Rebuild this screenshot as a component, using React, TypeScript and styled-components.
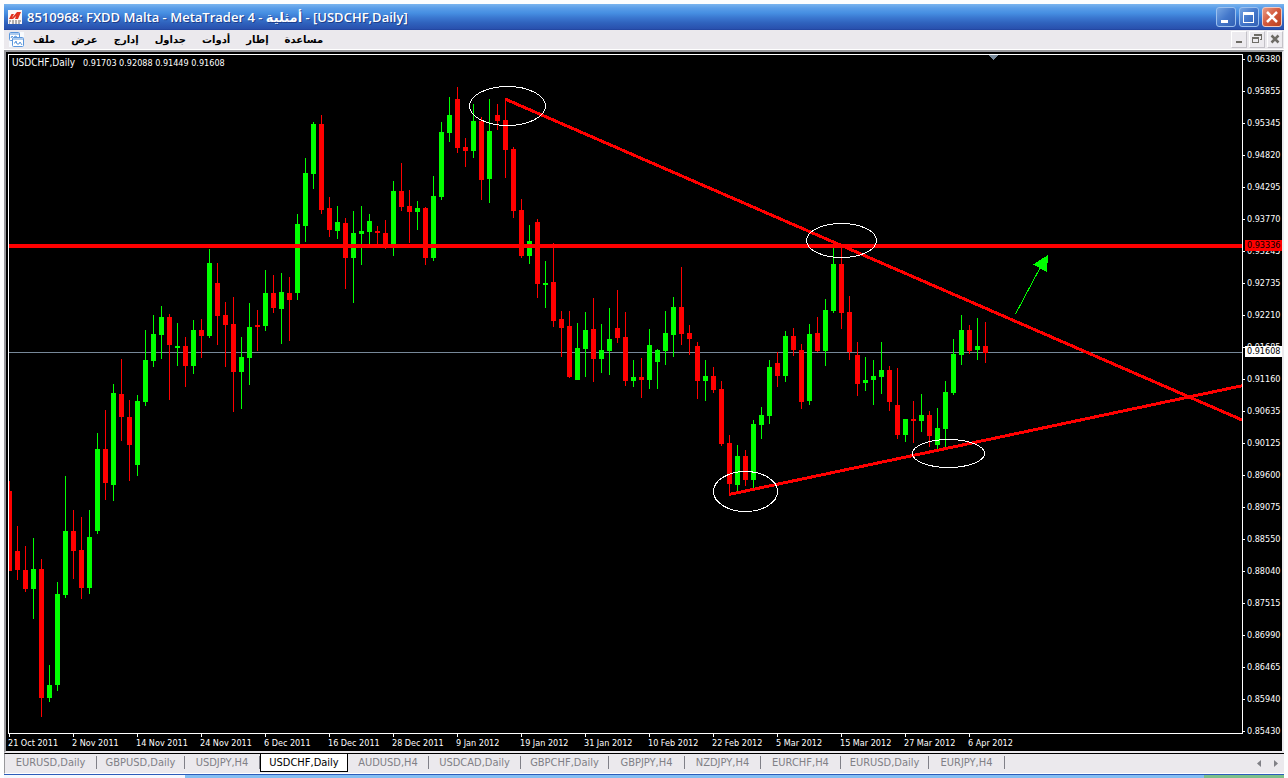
import React from "react";
import styled, { createGlobalStyle } from "styled-components";

const UP = "#00ff00";
const DOWN = "#ff0000";
const FACE = "#ebe9ed";
const AXIS_FONT = '"DejaVu Sans Condensed", "DejaVu Sans", sans-serif';

const GlobalStyle = createGlobalStyle`
  *, *::before, *::after { box-sizing: border-box; }
  body { margin: 0; background: #fdfdfe; font-family: ${AXIS_FONT}; }
  button { font-family: inherit; }
`;

const Page = styled.div`
  display: flex;
  flex-direction: column;
  min-height: 100vh;
  padding: 4px 4px 0;
`;

const TitleBar = styled.header`
  display: flex;
  align-items: center;
  height: 26px;
  padding: 0 2px 0 4px;
  background: linear-gradient(#79b4ee 0, #5b9de8 4px, #468fe2 9px, #3a76cf 14px, #2f62bd 19px, #2950ad 25px, #1e3f98 26px);
`;

const Title = styled.h1`
  flex: 1;
  margin: 0 0 0 5px;
  color: #fff;
  font: 600 13px/20px "Open Sans", "DejaVu Sans", sans-serif;
  text-shadow: 1px 1px 0 #1d3f8c;
  white-space: nowrap;
`;

const WindowButtons = styled.div`
  display: flex;
  gap: 3px;
`;

const WindowButton = styled.button<{ $danger?: boolean }>`
  width: 20px;
  height: 20px;
  padding: 0;
  border: 1px solid ${(p) => (p.$danger ? "#f3c9bf" : "#9cc0ee")};
  border-radius: 3px;
  background: ${(p) =>
    p.$danger
      ? "linear-gradient(135deg, #e89a86, #d2573a 50%, #b8401f)"
      : "linear-gradient(135deg, #76a5e2, #4478cb 50%, #3260b4)"};
  svg { display: block; }
`;

const MenuBar = styled.nav`
  display: flex;
  align-items: center;
  height: 20px;
  padding: 0 1px 0 5px;
  background: ${FACE};
  border-bottom: 1px solid #fff;
`;

const MenuList = styled.div`
  display: flex;
  flex: 1;
  gap: 16px;
  padding-left: 9px;
`;

const MenuItem = styled.button`
  padding: 0;
  border: 0;
  background: none;
  color: #000;
  font: bold 10px/16px "DejaVu Sans", sans-serif;
`;

const ChildButtons = styled.div`
  display: flex;
  gap: 2px;
`;

const ChildButton = styled.button`
  width: 16px;
  height: 17px;
  padding: 0;
  border: 1px solid;
  border-color: #fff #c4c2c8 #c4c2c8 #fff;
  background: #edebef;
  svg { display: block; }
`;

const ChartWindow = styled.main`
  display: grid;
  grid-template-columns: minmax(0, 1fr) 39px;
  grid-template-rows: 1fr 17px;
  flex: 1;
  padding: 2px 0 0 2px;
  border: 2px solid;
  border-color: #98989c ${FACE} ${FACE} #98989c;
  background: #000;
  color: #fff;
  font: 9px/12px ${AXIS_FONT};
`;

const Plot = styled.section`
  position: relative;
  overflow: hidden;
  border: 1px solid #fff;
`;

const PlotSvg = styled.svg`
  display: block;
  width: 100%;
  height: 100%;
`;

const Quote = styled.p`
  position: absolute;
  top: 2px;
  left: 3px;
  display: flex;
  align-items: baseline;
  gap: 8px;
  margin: 0;
`;

const QuoteSymbol = styled.span`
  font-size: 10px;
`;

const PriceScale = styled.ol`
  position: relative;
  margin: 0;
  padding: 0;
  list-style: none;
`;

/* The lowest label hangs past the plot's edge, beside the date scale. */
const PriceRow = styled.li`
  display: flex;
  align-items: center;
  height: 12px;
  margin-bottom: 20px;
  gap: 2px;
  &:first-child { margin-top: -1px; }
  &:last-of-type { margin-bottom: -8px; }
  &::before { content: ""; width: 2px; height: 1px; background: #fff; }
`;

const PriceTag = styled.output<{ $y: number; $bg: string }>`
  position: absolute;
  top: ${(p) => p.$y}px;
  left: 2px;
  right: 0;
  height: 11px;
  padding-left: 2px;
  background: ${(p) => p.$bg};
  color: #000;
  line-height: 11px;
`;

const DateScale = styled.ol`
  display: flex;
  grid-column: 1 / -1;
  margin: 0;
  padding: 0;
  list-style: none;
`;

const DateMark = styled.li`
  flex: 0 0 64px;
  white-space: nowrap;
  &::before { content: ""; display: block; width: 1px; height: 3px; margin-left: 1px; background: #fff; }
`;

const TabStrip = styled.div`
  display: flex;
  height: 21px;
  border-top: 1px solid #000;
  border-bottom: 1px solid #fff;
  border-left: 1px solid #98989c;
  background: ${FACE};
`;

const Tabs = styled.div`
  display: flex;
  flex: 1;
`;

const Tab = styled.button<{ $w: number; $active?: boolean }>`
  width: ${(p) => p.$w}px;
  height: ${(p) => (p.$active ? 18 : 13)}px;
  margin-top: ${(p) => (p.$active ? 0 : 2)}px;
  padding: 0;
  border: 0 solid ${(p) => (p.$active ? "#000" : "#808088")};
  border-width: ${(p) => (p.$active ? "0 1px 1px" : "0 1px 0 0")};
  background: ${(p) => (p.$active ? "#fff" : "none")};
  color: ${(p) => (p.$active ? "#000" : "#808086")};
  font: 11px/13px ${AXIS_FONT};
  white-space: nowrap;
`;

const ScrollButton = styled.button`
  width: 17px;
  padding: 0;
  border: 0;
  background: none;
  svg { display: block; margin: auto; }
`;

const Taskbar = styled.footer`
  height: 4px;
  border-top: 1px solid #2c5cba;
  background: linear-gradient(90deg, #f4f8fe 181px, #84bef2 181px, #84bef2 calc(100% - 80px), #7cc08a calc(100% - 80px));
`;

type Candle = [dir: 0 | 1, high: number, top: number, bottom: number, low: number];

// 1 is a rising day, 0 a falling one; levels are window rows.
const candles: Candle[] = [
  [0, 481, 491, 571, 571], [0, 526, 551, 570, 580], [0, 546, 570, 589, 592], [1, 538, 569, 589, 619],
  [0, 559, 569, 698, 717], [1, 665, 685, 698, 702], [1, 582, 594, 685, 691], [1, 476, 531, 595, 598],
  [0, 510, 531, 551, 579], [0, 517, 550, 588, 599], [1, 510, 537, 588, 594], [1, 433, 449, 531, 534],
  [0, 410, 449, 483, 500], [1, 384, 393, 485, 501], [0, 359, 394, 417, 441], [0, 400, 417, 445, 481],
  [1, 395, 401, 465, 476], [1, 330, 360, 402, 406], [1, 315, 334, 361, 367], [1, 306, 317, 335, 359],
  [0, 314, 317, 345, 400], [1, 323, 346, 348, 366], [0, 337, 346, 366, 387], [1, 320, 330, 366, 374],
  [0, 319, 330, 336, 358], [1, 249, 263, 336, 338], [0, 263, 283, 316, 345], [0, 302, 315, 325, 367],
  [0, 297, 324, 372, 412], [1, 337, 357, 372, 409], [1, 303, 327, 358, 385], [0, 310, 325, 327, 351],
  [1, 270, 293, 326, 331], [0, 275, 293, 308, 313], [1, 273, 292, 309, 344], [0, 277, 293, 300, 341],
  [1, 214, 224, 293, 300], [1, 158, 173, 226, 242], [1, 122, 124, 174, 189], [0, 115, 124, 210, 214],
  [0, 197, 208, 230, 237], [1, 206, 222, 231, 239], [0, 218, 223, 258, 289], [1, 211, 233, 258, 303],
  [1, 206, 231, 234, 265], [1, 214, 221, 232, 245], [0, 226, 231, 233, 245], [0, 220, 233, 246, 249],
  [1, 181, 191, 246, 256], [0, 163, 191, 207, 211], [0, 190, 206, 212, 243], [1, 201, 208, 212, 230],
  [0, 207, 208, 258, 265], [1, 176, 196, 258, 261], [1, 122, 132, 197, 200], [1, 97, 115, 133, 142],
  [0, 87, 99, 148, 153], [0, 138, 147, 151, 167], [1, 104, 121, 151, 158], [0, 117, 121, 180, 200],
  [1, 99, 131, 179, 203], [0, 104, 115, 121, 130], [0, 98, 120, 150, 178], [0, 147, 149, 211, 218],
  [0, 199, 210, 256, 258], [1, 225, 241, 256, 264], [0, 219, 222, 284, 298], [1, 261, 283, 285, 308],
  [0, 243, 282, 321, 327], [0, 311, 319, 328, 357], [0, 311, 326, 377, 378], [1, 323, 348, 380, 380],
  [1, 312, 330, 349, 377], [0, 298, 329, 359, 382], [1, 324, 350, 359, 373], [1, 308, 339, 351, 375],
  [0, 290, 328, 338, 343], [0, 312, 337, 381, 386], [1, 360, 377, 381, 387], [0, 358, 377, 380, 398],
  [1, 329, 345, 380, 389], [1, 349, 350, 362, 389], [1, 311, 333, 351, 365], [1, 297, 307, 335, 357],
  [0, 267, 307, 334, 345], [0, 325, 333, 339, 355], [0, 342, 346, 381, 399], [1, 360, 376, 381, 401],
  [0, 367, 376, 390, 393], [0, 381, 389, 444, 446], [0, 435, 443, 484, 494], [1, 445, 456, 485, 491],
  [0, 450, 456, 480, 486], [1, 420, 424, 480, 488], [1, 407, 415, 425, 439], [1, 360, 367, 416, 424],
  [0, 352, 363, 376, 387], [1, 331, 336, 376, 382], [0, 328, 336, 350, 356], [0, 344, 350, 402, 409],
  [1, 324, 334, 401, 405], [0, 317, 333, 351, 352], [1, 299, 310, 351, 366], [1, 246, 264, 311, 313],
  [0, 246, 264, 313, 329], [0, 296, 312, 352, 360], [0, 342, 355, 384, 396], [1, 357, 380, 383, 391],
  [1, 360, 376, 380, 405], [1, 342, 370, 377, 394], [0, 366, 370, 402, 411], [0, 368, 405, 435, 439],
  [1, 419, 419, 435, 442], [0, 401, 419, 421, 443], [1, 394, 415, 421, 432], [0, 411, 415, 436, 447],
  [1, 408, 428, 445, 449], [1, 381, 392, 429, 447], [1, 339, 354, 393, 395], [1, 315, 330, 355, 365],
  [0, 325, 330, 351, 354], [1, 318, 346, 350, 360], [0, 322, 346, 353, 363],
];

const prices = [
  "0.96380", "0.95855", "0.95345", "0.94820", "0.94295", "0.93770", "0.93245", "0.92735",
  "0.92210", "0.91685", "0.91160", "0.90635", "0.90125", "0.89600", "0.89075", "0.88550",
  "0.88040", "0.87515", "0.86990", "0.86465", "0.85940", "0.85430",
];

const dates = [
  "21 Oct 2011", "2 Nov 2011", "14 Nov 2011", "24 Nov 2011", "6 Dec 2011", "16 Dec 2011",
  "28 Dec 2011", "9 Jan 2012", "19 Jan 2012", "31 Jan 2012", "10 Feb 2012", "22 Feb 2012",
  "5 Mar 2012", "15 Mar 2012", "27 Mar 2012", "6 Apr 2012",
];

const menus = ["ملف", "عرض", "إدارج", "جداول", "أدوات", "إطار", "مساعدة"];

const tabs: [string, number][] = [
  ["EURUSD,Daily", 92], ["GBPUSD,Daily", 88], ["USDJPY,H4", 75], ["USDCHF,Daily", 88],
  ["AUDUSD,H4", 81], ["USDCAD,Daily", 92], ["GBPCHF,Daily", 88], ["GBPJPY,H4", 76],
  ["NZDJPY,H4", 76], ["EURCHF,H4", 80], ["EURUSD,Daily", 88], ["EURJPY,H4", 76],
];

const rings = [
  [507.5, 106, 38, 19.5], [841.5, 240.5, 35, 17], [745.5, 491.5, 32, 20], [948.5, 453.5, 36, 14],
];

function AppIcon() {
  return (
    <svg width="14" height="14" viewBox="0 0 14 14" aria-hidden="true">
      <rect width="14" height="14" fill="#fbf7f7" />
      <path d="M1 9 3.500 4H6L4 8l5-6h2L9 7l2-5h2l-3 7H7l1-3-3 3z" fill="#e0301e" />
      <path d="M1 11h2M4 11h2M7 11h2M10 11h3M1 13h1M4 13h2M7 13h2M10 13h2" stroke="#666" />
    </svg>
  );
}

function ChartIcon() {
  return (
    <svg width="15" height="15" viewBox="0 0 15 15" aria-hidden="true">
      <rect width="15" height="15" fill="#f7fafe" />
      <g fill="#fff" stroke="#5c97dc">
        <rect x="0.5" y="0.5" width="10" height="8" rx="1" />
        <path d="M1 2h9" />
        <path d="M2 6l1-2 2 2 1-2 2 1" fill="none" />
        <rect x="3.5" y="5.5" width="11" height="9" rx="1" />
        <path d="M4 7h10" />
        <path d="M5 11h1l1-2 1 3 2 0 1-2 2 3" fill="none" />
      </g>
    </svg>
  );
}

function PlotDrawing() {
  return (
    <PlotSvg role="img" aria-label="USDCHF daily candles" shapeRendering="crispEdges">
      <rect y="297" width="100%" height="1" fill="#778899" />
      <g transform="translate(-9 -55)">
        {candles.map(([up, high, top, bottom, low], i) => {
          const x = 9 + i * 8;
          return (
            <g key={i} fill={up ? UP : DOWN}>
              <rect x={x} y={high} width="1" height={low - high} />
              <rect x={x - 2} y={top} width="5" height={bottom - top} />
            </g>
          );
        })}
        <path d="M989 55h9l-4.500 5z" fill="#778899" />
      </g>
      <rect y="189" width="100%" height="4" fill={DOWN} />
      <g transform="translate(-9 -55)">
        <path d="M505 99 2505 970M729 494.500 2729 70.500" stroke={DOWN} strokeWidth="3" />
        <path d="M1015.500 314 1040 268" stroke={UP} />
        <path d="M1048 255 1033 264.500 1047 272z" fill={UP} />
        {rings.map(([cx, cy, rx, ry]) => (
          <ellipse key={cx} cx={cx} cy={cy} rx={rx} ry={ry} fill="none" stroke="#fff" />
        ))}
      </g>
    </PlotSvg>
  );
}

export default function App() {
  return (
    <>
      <GlobalStyle />
      <Page>
        <TitleBar>
          <AppIcon />
          <Title>8510968: FXDD Malta - MetaTrader 4 - أمثلية - [USDCHF,Daily]</Title>
          <WindowButtons>
            <WindowButton aria-label="Minimize">
              <svg width="18" height="18"><path d="M4 13.500h7" stroke="#fff" strokeWidth="3" /></svg>
            </WindowButton>
            <WindowButton aria-label="Maximize">
              <svg width="18" height="18" shapeRendering="crispEdges">
                <path d="M3 4h11v11h-11zM4 7h9v7h-9z" fill="#fff" fillRule="evenodd" />
              </svg>
            </WindowButton>
            <WindowButton $danger aria-label="Close">
              <svg width="18" height="18"><path d="M4 4 14 14M14 4 4 14" stroke="#fff" strokeWidth="2.500" /></svg>
            </WindowButton>
          </WindowButtons>
        </TitleBar>
        <MenuBar>
          <ChartIcon />
          <MenuList>
            {menus.map((m) => (
              <MenuItem key={m}>{m}</MenuItem>
            ))}
          </MenuList>
          <ChildButtons>
            <ChildButton aria-label="Minimize chart">
              <svg width="14" height="15"><path d="M4 10h6" stroke="#6e6c66" strokeWidth="2" /></svg>
            </ChildButton>
            <ChildButton aria-label="Restore chart">
              <svg width="14" height="15" fill="#6e6c66" fillRule="evenodd" shapeRendering="crispEdges">
                <path d="M4 2h8v6h-2V7h1V4H4zM2 5h7v6H2zM3 7h5v3H3z" />
              </svg>
            </ChildButton>
            <ChildButton aria-label="Close chart">
              <svg width="14" height="15"><path d="M3.500 3.500 10.500 10.500M10.500 3.500 3.500 10.500" stroke="#6e6c66" strokeWidth="2.500" /></svg>
            </ChildButton>
          </ChildButtons>
        </MenuBar>
        <ChartWindow>
          <Plot>
            <PlotDrawing />
            <Quote>
              <QuoteSymbol>USDCHF,Daily</QuoteSymbol>
              <span>0.91703 0.92088 0.91449 0.91608</span>
            </Quote>
          </Plot>
          <PriceScale>
            {prices.map((p) => (
              <PriceRow key={p}>{p}</PriceRow>
            ))}
            <PriceTag $y={186} $bg={DOWN}>0.93336</PriceTag>
            <PriceTag $y={292} $bg="#fff">0.91608</PriceTag>
          </PriceScale>
          <DateScale>
            {dates.map((d) => (
              <DateMark key={d}>{d}</DateMark>
            ))}
          </DateScale>
        </ChartWindow>
        <TabStrip>
          <Tabs role="tablist">
            {tabs.map(([name, w], i) => (
              <Tab key={i} role="tab" aria-selected={i === 3} $w={w} $active={i === 3}>
                {name}
              </Tab>
            ))}
          </Tabs>
          <ScrollButton aria-label="Scroll tabs left">
            <svg width="4" height="7"><path d="M4 0v7L0 3.500z" fill="#808086" /></svg>
          </ScrollButton>
          <ScrollButton aria-label="Scroll tabs right">
            <svg width="4" height="7"><path d="M0 0v7l4-3.500z" fill="#808086" /></svg>
          </ScrollButton>
        </TabStrip>
        <Taskbar />
      </Page>
    </>
  );
}
